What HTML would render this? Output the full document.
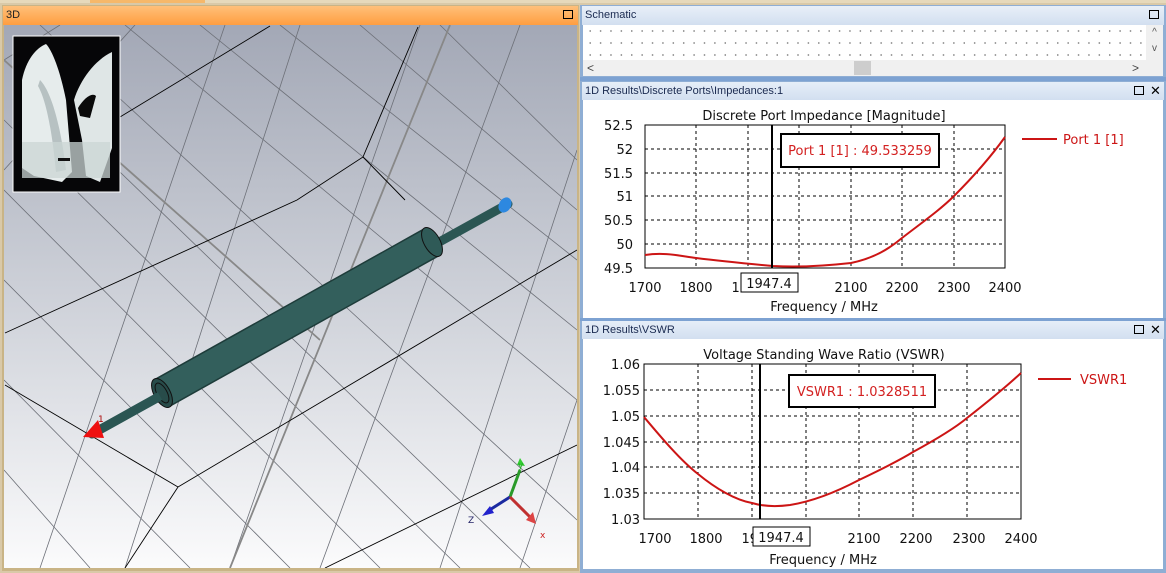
<!DOCTYPE html>
<html><head><meta charset="utf-8"><style>
html,body{margin:0;padding:0;}
body{width:1166px;height:573px;position:relative;overflow:hidden;background:#d9c9a8;font-family:"Liberation Sans",sans-serif;}
.abs{position:absolute;}
.hdr{font-size:11px;line-height:18px;padding-left:3px;color:#1a2a50;box-sizing:border-box;}
.max{position:absolute;width:8px;height:7px;border:1.5px solid #000;top:4px;}
svg text{font-family:"DejaVu Sans","Liberation Sans",sans-serif;}
</style></head><body>
<div class="abs" style="left:0;top:0;width:1166px;height:3px;background:#e6d9bb"></div>
<div class="abs" style="left:90px;top:0;width:115px;height:3px;background:#f6b86a"></div>

<!-- 3D panel -->
<div class="abs" style="left:2px;top:5px;width:577px;height:566px;background:#c9b486"></div>
<div class="abs hdr" style="left:3px;top:6px;width:575px;height:19px;background:linear-gradient(#ffc07a,#ff9e40);color:#222">3D<div class="max" style="left:560px"></div></div>
<svg class="abs" style="left:4px;top:25px" width="573" height="543" viewBox="4 25 573 543">
<defs><linearGradient id="bg" x1="0" y1="0" x2="0" y2="1"><stop offset="0" stop-color="#a3a8b6"/><stop offset="0.55" stop-color="#d2d5dc"/><stop offset="1" stop-color="#fbfbfc"/></linearGradient></defs>
<rect x="4" y="25" width="573" height="543" fill="url(#bg)"/>
<g stroke="#6d7078" stroke-width="0.8" fill="none">
<path d="M4 60 L60 25 M4 170 L135 25 M40 568 L225 25 M125 568 L300 25 M230 568 L420 25 M320 568 L520 25 M440 568 L577 150 M520 568 L577 400"/>
<path d="M40 25 L577 520 M125 25 L577 400 M200 25 L577 330 M280 25 L577 260 M360 25 L577 210 M440 25 L577 160 M4 120 L460 568 M4 190 L380 568 M4 280 L290 568 M4 380 L190 568 M4 470 L90 568 M4 60 L530 568"/>
</g>
<g stroke="#888" stroke-width="1.8" fill="none"><path d="M230 568 L450 25 M4 60 L320 340"/></g>
<g stroke="#000" stroke-width="0.9" fill="none">
<path d="M120 117 L270 26 M5 385 L178 487 L125 568 M178 487 L577 250 M5 333 L297 200 L363 157 L418 27 M363 157 L405 200 M325 568 L577 445"/>
</g>
<!-- rod -->
<line x1="92" y1="434" x2="508" y2="204" stroke="#2b5653" stroke-width="9" stroke-linecap="round"/>
<line x1="162" y1="393" x2="432" y2="242" stroke="#1e3c3a" stroke-width="32"/>
<line x1="162" y1="393" x2="432" y2="242" stroke="#335f5c" stroke-width="29"/>
<ellipse cx="432" cy="242" rx="8" ry="16" transform="rotate(-29 432 242)" fill="#2f5a57" stroke="#111"/>
<ellipse cx="162" cy="393" rx="8" ry="16" transform="rotate(-29 162 393)" fill="#284c4a" stroke="#111"/>
<ellipse cx="162" cy="393" rx="5" ry="11" transform="rotate(-29 162 393)" fill="none" stroke="#111"/>
<line x1="92" y1="434" x2="160" y2="396" stroke="#2b5653" stroke-width="9"/>
<path d="M83 437 L98 420 L104 438 Z" fill="#ee1010"/>
<text x="98" y="422" font-size="9" fill="#a00">1</text>
<ellipse cx="505" cy="205" rx="6" ry="8" fill="#2d88e0" transform="rotate(30 505 205)"/>
<!-- axes -->
<line x1="510" y1="497" x2="520" y2="470" stroke="#2a9a2a" stroke-width="3"/>
<path d="M517 465 L525 466 L520 458Z" fill="#3c3"/>
<line x1="510" y1="497" x2="488" y2="511" stroke="#1a2aa0" stroke-width="3"/>
<path d="M482 516 L490 506 L494 513Z" fill="#22c"/>
<line x1="510" y1="497" x2="530" y2="517" stroke="#c03030" stroke-width="3"/>
<path d="M536 524 L526 520 L533 512Z" fill="#d44"/>
<text x="518" y="468" font-size="9" fill="#2a2">y</text>
<text x="468" y="523" font-size="9" fill="#226">Z</text>
<text x="540" y="538" font-size="9" fill="#c22">x</text>
<!-- inset photo -->
<rect x="13" y="36" width="107" height="156" fill="#060608" stroke="#fff"/>
<path d="M22 80 C26 60 36 48 46 44 C52 50 60 70 66 100 L72 172 L62 182 L34 176 L22 168 Z" fill="#e6ecec"/>
<path d="M74 100 C80 80 95 60 112 52 L112 148 L100 182 L86 176 L82 140 Z" fill="#dfe6e6"/>
<path d="M40 80 C50 90 60 120 66 170 L56 172 C52 130 46 100 38 86Z" fill="#b7c1c2"/>
<path d="M78 108 C84 98 92 92 96 96 L90 118 L80 116Z" fill="#0a0a0a"/>
<rect x="22" y="142" width="88" height="36" fill="#cbd5d4" opacity="0.75"/>
<rect x="58" y="158" width="12" height="3" fill="#111"/>
</svg>

<!-- right panel -->
<div class="abs" style="left:580px;top:5px;width:586px;height:568px;background:#8faed4"></div>
<div class="abs hdr" style="left:582px;top:6px;width:582px;height:19px;background:linear-gradient(#e8eff8,#d2dff0)">Schematic<div class="max" style="left:567px"></div></div>
<div class="abs" style="left:583px;top:25px;width:580px;height:51px;background:#fff;background-image:radial-gradient(circle,#555 0.6px,transparent 0.8px);background-size:10.4px 12px;background-position:2px 0"></div>
<div class="abs" style="left:1146px;top:25px;width:17px;height:35px;background:#f0f0f0;font-size:10px;text-align:center;line-height:16px;color:#555">^<br>v</div>
<div class="abs" style="left:583px;top:60px;width:580px;height:16px;background:#f0f0f0;font-size:12px;line-height:16px;color:#444"><span style="margin-left:4px">&lt;</span><span style="position:absolute;left:271px;top:1px;width:17px;height:14px;background:#cdcdcd"></span><span style="position:absolute;left:549px">&gt;</span></div>
<div class="abs" style="left:580px;top:77px;width:586px;height:4px;background:#7da2d2"></div>

<div class="abs hdr" style="left:582px;top:82px;width:582px;height:18px;background:linear-gradient(#e6eef8,#d2dff0)">1D Results\Discrete Ports\Impedances:1<div class="max" style="left:552px"></div><span style="position:absolute;left:568px;top:0;font-size:13px;color:#000">✕</span></div>
<svg class="abs" style="left:583px;top:100px" width="580" height="218" viewBox="583 100 580 218">
<rect x="583" y="100" width="580" height="218" fill="#fff"/>
<text x="824" y="120" font-size="13" text-anchor="middle" fill="#111">Discrete Port Impedance [Magnitude]</text>
<g stroke="#000" stroke-width="1" stroke-dasharray="3,3">
<path d="M696 125V268 M748 125V268 M799 125V268 M851 125V268 M902 125V268 M954 125V268"/>
<path d="M645 149H1005 M645 173H1005 M645 196H1005 M645 220H1005 M645 244H1005"/>
</g>
<rect x="645" y="125" width="360" height="143" fill="none" stroke="#000"/>
<g font-size="13" fill="#111" text-anchor="end">
<text x="633" y="130">52.5</text><text x="633" y="154">52</text><text x="633" y="178">51.5</text><text x="633" y="201">51</text><text x="633" y="225">50.5</text><text x="633" y="249">50</text><text x="633" y="273">49.5</text></g>
<g font-size="13" fill="#111" text-anchor="middle">
<text x="645" y="292">1700</text><text x="696" y="292">1800</text><text x="748" y="292">1900</text><text x="851" y="292">2100</text><text x="902" y="292">2200</text><text x="954" y="292">2300</text><text x="1005" y="292">2400</text>
<text x="824" y="311">Frequency / MHz</text></g>
<path d="M645 255 C665 252 680 256 696 258 C720 261 740 263 773 266 C790 267 815 267 851 263 C875 258 890 248 902 238 C920 224 940 210 954 196 C970 180 990 158 1005 137" fill="none" stroke="#cc1515" stroke-width="2"/>
<line x1="772" y1="125" x2="772" y2="268" stroke="#000" stroke-width="2"/>
<rect x="741" y="273" width="57" height="19" fill="#fff" stroke="#000"/>
<text x="769" y="288" font-size="13" text-anchor="middle" fill="#111">1947.4</text>
<rect x="781" y="134" width="158" height="33" fill="#fff" stroke="#000" stroke-width="2"/>
<text x="860" y="155" font-size="13" text-anchor="middle" fill="#d32020">Port 1 [1] : 49.533259</text>
<line x1="1022" y1="139" x2="1057" y2="139" stroke="#cc1515" stroke-width="2"/>
<text x="1063" y="144" font-size="13" fill="#cc1515">Port 1 [1]</text>
</svg>
<div class="abs" style="left:580px;top:318px;width:586px;height:3px;background:#7da2d2"></div>

<div class="abs hdr" style="left:582px;top:321px;width:582px;height:18px;background:linear-gradient(#e6eef8,#d2dff0)">1D Results\VSWR<div class="max" style="left:552px"></div><span style="position:absolute;left:568px;top:0;font-size:13px;color:#000">✕</span></div>
<svg class="abs" style="left:583px;top:339px" width="580" height="230" viewBox="583 339 580 230">
<rect x="583" y="339" width="580" height="230" fill="#fff"/>
<text x="824" y="359" font-size="13" text-anchor="middle" fill="#111">Voltage Standing Wave Ratio (VSWR)</text>
<g stroke="#000" stroke-width="1" stroke-dasharray="3,3">
<path d="M698 364V519 M752 364V519 M806 364V519 M859 364V519 M913 364V519 M967 364V519"/>
<path d="M644 364H1021 M644 390H1021 M644 416H1021 M644 442H1021 M644 467H1021 M644 493H1021"/>
</g>
<rect x="644" y="364" width="377" height="155" fill="none" stroke="#000"/>
<g font-size="13" fill="#111" text-anchor="end">
<text x="640" y="369">1.06</text><text x="640" y="395">1.055</text><text x="640" y="421">1.05</text><text x="640" y="447">1.045</text><text x="640" y="472">1.04</text><text x="640" y="498">1.035</text><text x="640" y="524">1.03</text></g>
<g font-size="13" fill="#111" text-anchor="middle">
<text x="655" y="543">1700</text><text x="706" y="543">1800</text><text x="758" y="543">1900</text><text x="864" y="543">2100</text><text x="916" y="543">2200</text><text x="969" y="543">2300</text><text x="1021" y="543">2400</text>
<text x="823" y="564">Frequency / MHz</text></g>
<path d="M644 417 C660 436 680 460 698 474 C715 488 735 500 752 503 C762 506 775 507 790 505 C815 501 840 490 859 480 C880 470 900 460 913 452 C935 440 955 428 967 418 C990 400 1008 385 1021 373" fill="none" stroke="#cc1515" stroke-width="2"/>
<line x1="760" y1="364" x2="760" y2="519" stroke="#000" stroke-width="2"/>
<rect x="753" y="527" width="57" height="19" fill="#fff" stroke="#000"/>
<text x="781" y="542" font-size="13" text-anchor="middle" fill="#111">1947.4</text>
<rect x="789" y="375" width="146" height="32" fill="#fff" stroke="#000" stroke-width="2"/>
<text x="862" y="396" font-size="13" text-anchor="middle" fill="#d32020">VSWR1 : 1.0328511</text>
<line x1="1038" y1="379" x2="1071" y2="379" stroke="#cc1515" stroke-width="2"/>
<text x="1080" y="384" font-size="13" fill="#cc1515">VSWR1</text>
</svg>
</body></html>
